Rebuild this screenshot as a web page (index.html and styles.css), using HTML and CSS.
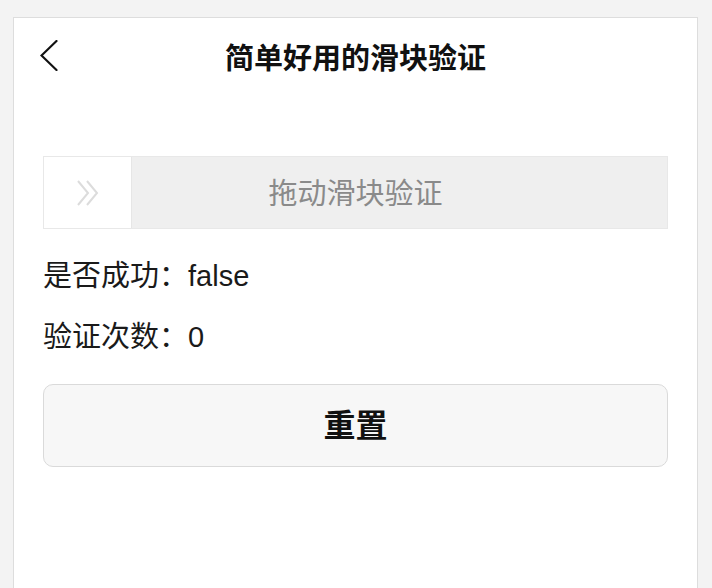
FILE: index.html
```html
<!DOCTYPE html>
<html lang="zh-CN">
<head>
<meta charset="utf-8">
<title>简单好用的滑块验证</title>
<link rel="stylesheet" href="styles.css">
</head>
<body>
<div class="panel">
  <header class="header">
    <button class="back" aria-label="返回">
      <svg width="18" height="31" viewBox="0 0 18 31"><polyline points="16.5,1 1.5,15.5 16.5,30" fill="none" stroke="#111" stroke-width="2.2" stroke-linecap="round" stroke-linejoin="miter"/></svg>
    </button>
    <h1 class="title">简单好用的滑块验证</h1>
    <span></span>
  </header>
  <main class="content">
    <div class="slider">
      <div class="handle">
        <svg width="24" height="26" viewBox="0 0 24 26"><polyline points="2,1 12,13 2,25" fill="none" stroke="#dcdcdc" stroke-width="2"/><polyline points="11,1 21,13 11,25" fill="none" stroke="#dcdcdc" stroke-width="2"/></svg>
      </div>
      <span class="slider-text">拖动滑块验证</span>
    </div>
    <p class="info first">是否成功：false</p>
    <p class="info">验证次数：0</p>
    <button class="reset">重置</button>
  </main>
</div>
</body>
</html>
```
FILE: styles.css
```css
* { box-sizing: border-box; }
html, body { height: 100%; }
body {
  margin: 0;
  background: #f3f3f3;
  padding: 17px 14px 0 13px;
  font-family: "Liberation Sans", "Noto Sans CJK SC", sans-serif;
  overflow: hidden;
}
.panel {
  background: #fff;
  border: 1px solid #dddddd;
  border-bottom: none;
  height: 100%;
}
.header {
  display: grid;
  grid-template-columns: 1fr auto 1fr;
  align-items: center;
  height: 80px;
  padding: 0 26px 4px;
}
.back {
  justify-self: start;
  background: none;
  border: 0;
  padding: 0;
  margin-top: -2px;
  display: flex;
}
.title {
  margin: 0;
  font-size: 29px;
  font-weight: 700;
  color: #111;
  font-family: "Noto Sans CJK SC", sans-serif;
}
.content {
  padding: 58px 29px 0;
  display: flex;
  flex-direction: column;
}
.slider {
  position: relative;
  height: 73px;
  background: #efefef;
  border: 1px solid #e8e8e8;
  display: flex;
  align-items: center;
  justify-content: center;
  padding-bottom: 4px;
}
.handle {
  position: absolute;
  left: 0;
  top: 0;
  bottom: 0;
  width: 88px;
  background: #fff;
  border-right: 1px solid #e6e6e6;
  display: flex;
  align-items: center;
  justify-content: center;
}
.slider-text {
  font-family: "Noto Sans CJK SC", sans-serif;
  font-size: 29px;
  color: #8a8a8a;
}
.info {
  margin: 0;
  font-size: 29px;
  line-height: 40px;
  color: #1a1a1a;
  margin-top: 21px;
}
.info.first { margin-top: 27px; }
.reset {
  margin-top: 27px;
  height: 83px;
  border: 1px solid #dadada;
  border-radius: 10px;
  background: #f7f7f7;
  font-family: "Noto Sans CJK SC", sans-serif;
  font-size: 32px;
  font-weight: 700;
  color: #111;
  cursor: pointer;
  padding: 0 0 6px;
}
```
